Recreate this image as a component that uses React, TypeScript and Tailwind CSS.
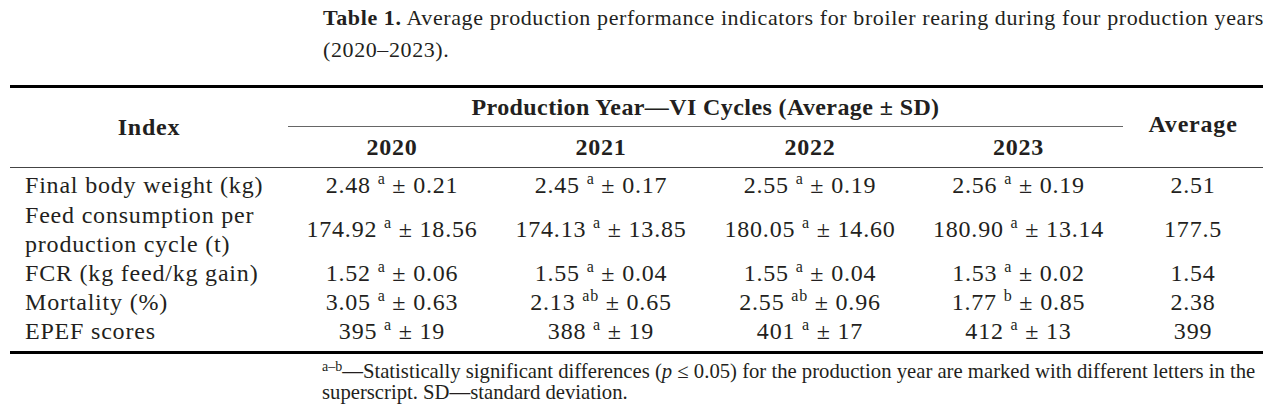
import React from "react";

type Cell = { v: string; s: string; sd: string };
type Row = { label: React.ReactNode; cells: Cell[]; avg: string; h: string };

const rows: Row[] = [
  {
    label: "Final body weight (kg)",
    cells: [
      { v: "2.48", s: "a", sd: "0.21" },
      { v: "2.45", s: "a", sd: "0.17" },
      { v: "2.55", s: "a", sd: "0.19" },
      { v: "2.56", s: "a", sd: "0.19" },
    ],
    avg: "2.51",
    h: "h-[33px] pt-[3px]",
  },
  {
    label: (
      <>
        Feed consumption per
        <br />
        production cycle (t)
      </>
    ),
    cells: [
      { v: "174.92", s: "a", sd: "18.56" },
      { v: "174.13", s: "a", sd: "13.85" },
      { v: "180.05", s: "a", sd: "14.60" },
      { v: "180.90", s: "a", sd: "13.14" },
    ],
    avg: "177.5",
    h: "h-[58px]",
  },
  {
    label: "FCR (kg feed/kg gain)",
    cells: [
      { v: "1.52", s: "a", sd: "0.06" },
      { v: "1.55", s: "a", sd: "0.04" },
      { v: "1.55", s: "a", sd: "0.04" },
      { v: "1.53", s: "a", sd: "0.02" },
    ],
    avg: "1.54",
    h: "h-[29px]",
  },
  {
    label: "Mortality (%)",
    cells: [
      { v: "3.05", s: "a", sd: "0.63" },
      { v: "2.13", s: "ab", sd: "0.65" },
      { v: "2.55", s: "ab", sd: "0.96" },
      { v: "1.77", s: "b", sd: "0.85" },
    ],
    avg: "2.38",
    h: "h-[29px]",
  },
  {
    label: "EPEF scores",
    cells: [
      { v: "395", s: "a", sd: "19" },
      { v: "388", s: "a", sd: "19" },
      { v: "401", s: "a", sd: "17" },
      { v: "412", s: "a", sd: "13" },
    ],
    avg: "399",
    h: "h-[34px] pb-[5px]",
  },
];

const Val = ({ c }: { c: Cell }) => (
  <span>
    {c.v} <sup className="text-[16px] top-[-0.55em]">{c.s}</sup> ± {c.sd}
  </span>
);

export default function App() {
  return (
    <div
      className="w-[1280px] h-[404px] bg-white text-[#231f20] overflow-hidden"
      style={{ fontFamily: '"Liberation Serif", serif' }}
    >
      <p className="ml-[323px] pt-[2px] text-[22px] tracking-[0.6px] leading-[32px] whitespace-nowrap">
        <b>Table 1.</b> Average production performance indicators for broiler rearing during four production years
        <br />
        (2020–2023).
      </p>

      <table className="ml-[10px] mt-[19px] w-[1253px] table-fixed border-collapse text-[24px] tracking-[0.8px] leading-[29px]">
        <colgroup>
          <col className="w-[278px]" />
          <col className="w-[208px]" />
          <col className="w-[210px]" />
          <col className="w-[208px]" />
          <col className="w-[209px]" />
          <col className="w-[140px]" />
        </colgroup>
        <thead>
          <tr className="border-t-[3px] border-black h-[40px]">
            <th rowSpan={2} className="font-bold text-center align-middle border-b border-[#444]">
              Index
            </th>
            <th colSpan={4} className="font-bold text-center border-b border-[#666] tracking-[0.4px]">
              Production Year—VI Cycles (Average ± SD)
            </th>
            <th rowSpan={2} className="font-bold text-center align-middle border-b border-[#444] pb-[6px]">
              Average
            </th>
          </tr>
          <tr className="h-[41px] border-b border-[#444]">
            <th className="font-bold">2020</th>
            <th className="font-bold">2021</th>
            <th className="font-bold">2022</th>
            <th className="font-bold">2023</th>
          </tr>
        </thead>
        <tbody>
          {rows.map((r, i) => (
            <tr key={i} className={i === rows.length - 1 ? "border-b-[3px] border-black" : ""}>
              <td className={`pl-[15px] text-left align-middle ${r.h}`}>{r.label}</td>
              {r.cells.map((c, j) => (
                <td key={j} className={`text-center align-middle ${r.h}`}>
                  <Val c={c} />
                </td>
              ))}
              <td className={`text-center align-middle ${r.h}`}>{r.avg}</td>
            </tr>
          ))}
        </tbody>
      </table>

      <p className="ml-[322px] mt-[7px] text-[20.7px] leading-[21px] whitespace-nowrap">
        <sup className="text-[14px] top-[-0.45em]">a–b</sup>—Statistically significant differences (<i>p</i> ≤ 0.05) for the
        production year are marked with different letters in the
        <br />
        superscript. SD—standard deviation.
      </p>
    </div>
  );
}
